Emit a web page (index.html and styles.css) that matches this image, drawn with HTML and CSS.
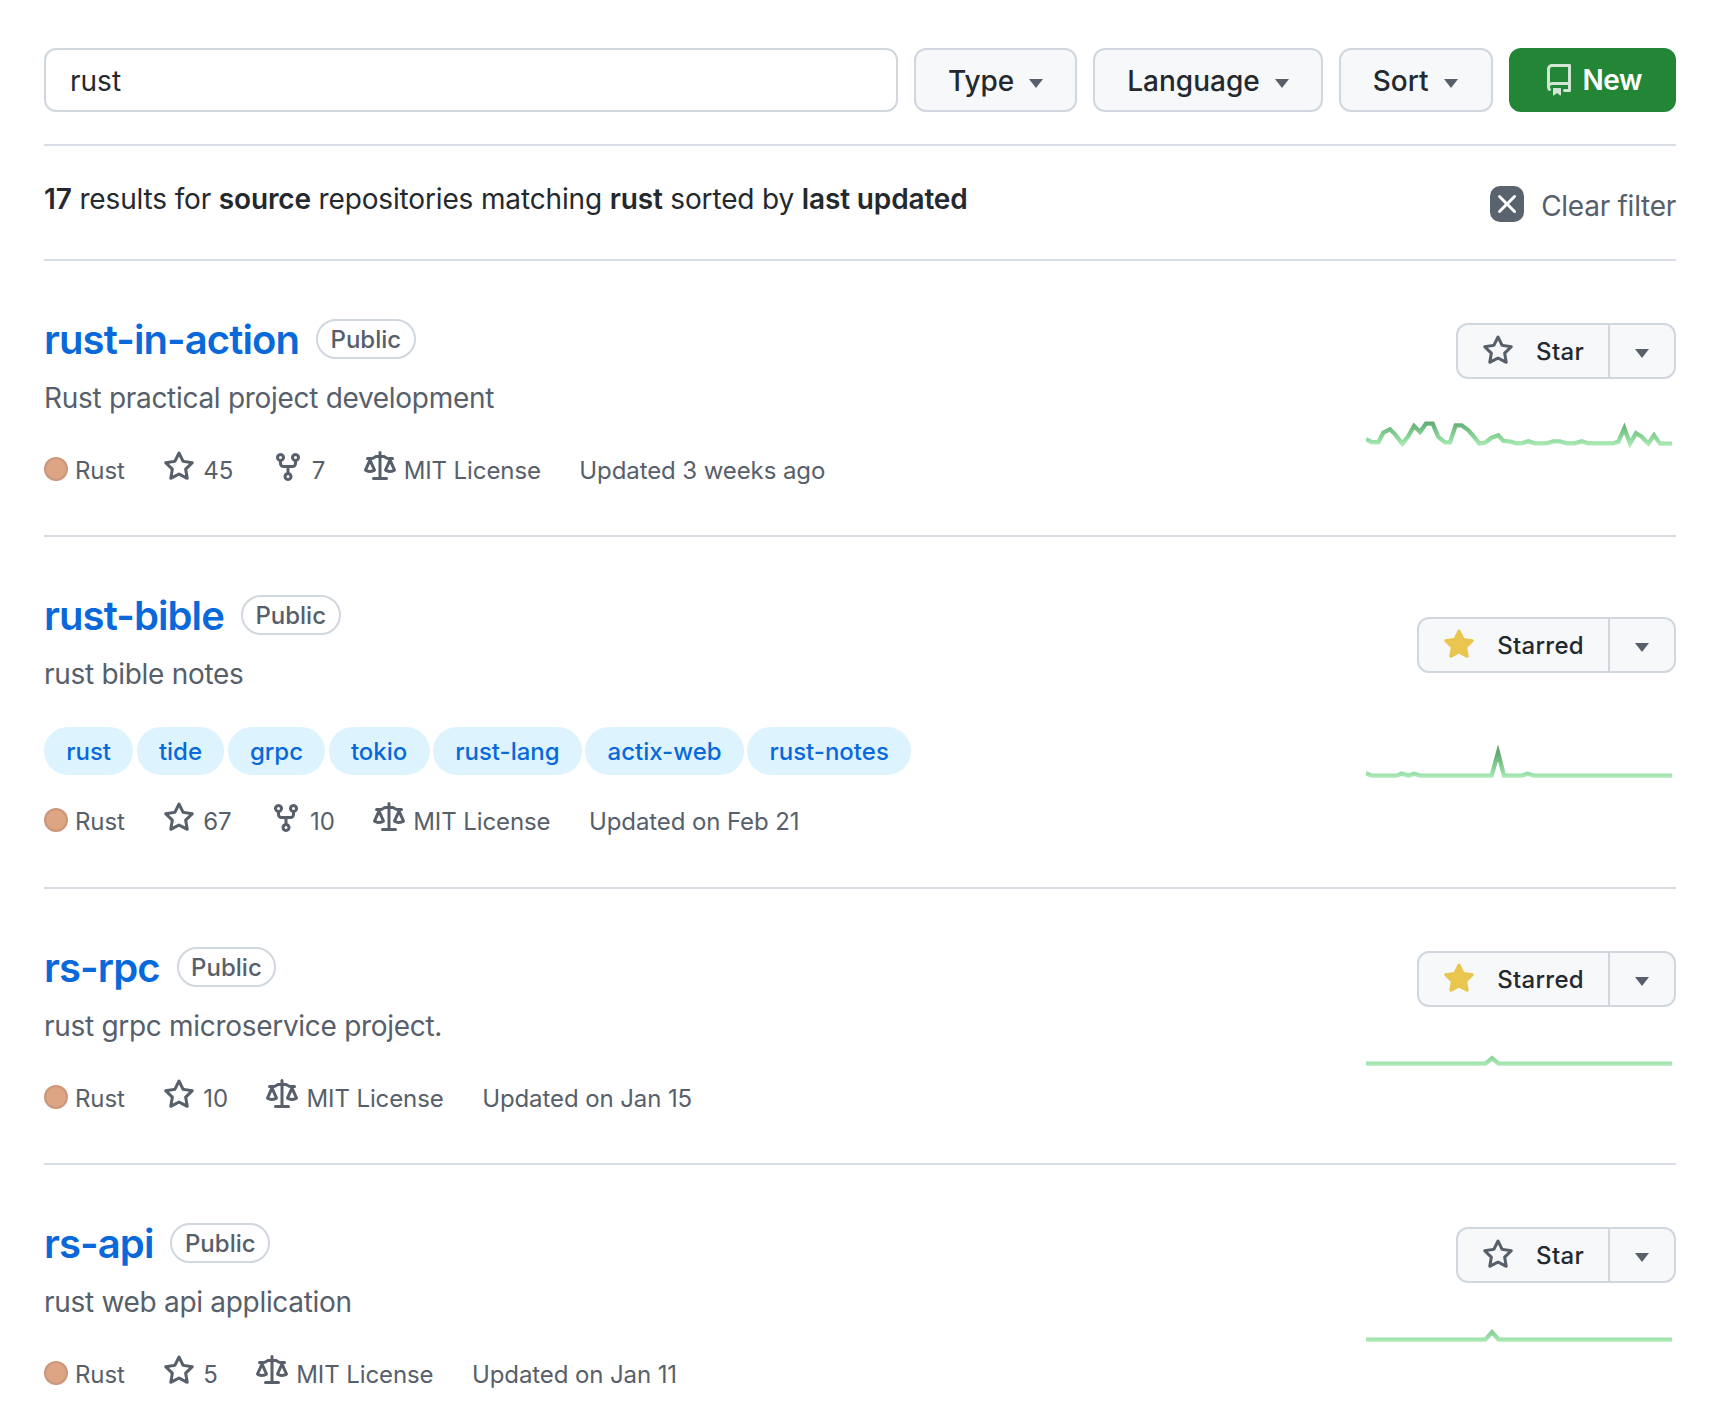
FILE: index.html
```html
<!DOCTYPE html>
<html lang="en">
<head>
	<meta charset="utf-8">
	<title>Repositories</title>
	<link rel="stylesheet" href="styles.css">
</head>
<body>
	<!-- Icons -->
	<svg class="sprite" aria-hidden="true">
		<defs>
			<linearGradient id="sparkGrad" gradientUnits="userSpaceOnUse" x1="0" y1="436" x2="0" y2="360">
				<stop offset="0" stop-color="#b4ecbd"/>
				<stop offset="0.25" stop-color="#93dda2"/>
				<stop offset="1" stop-color="#5fa86f"/>
			</linearGradient>
		</defs>
		<symbol id="i-star" viewBox="0 0 16 16"><path d="M8 .25a.75.75 0 0 1 .673.418l1.882 3.815 4.21.612a.75.75 0 0 1 .416 1.279l-3.046 2.97.719 4.192a.751.751 0 0 1-1.088.791L8 12.347l-3.766 1.98a.75.75 0 0 1-1.088-.79l.72-4.194L.818 6.374a.75.75 0 0 1 .416-1.28l4.21-.611L7.327.668A.75.75 0 0 1 8 .25Zm0 2.445L6.615 5.5a.75.75 0 0 1-.564.41l-3.097.45 2.24 2.184a.75.75 0 0 1 .216.664l-.528 3.084 2.769-1.456a.75.75 0 0 1 .698 0l2.77 1.456-.53-3.084a.75.75 0 0 1 .216-.664l2.24-2.183-3.096-.45a.75.75 0 0 1-.564-.41L8 2.694Z"/></symbol>
		<symbol id="i-star-fill" viewBox="0 0 16 16"><path d="M8 .25a.75.75 0 0 1 .673.418l1.882 3.815 4.21.612a.75.75 0 0 1 .416 1.279l-3.046 2.97.719 4.192a.751.751 0 0 1-1.088.791L8 12.347l-3.766 1.98a.75.75 0 0 1-1.088-.79l.72-4.194L.818 6.374a.75.75 0 0 1 .416-1.28l4.21-.611L7.327.668A.75.75 0 0 1 8 .25Z"/></symbol>
		<symbol id="i-fork" viewBox="0 0 16 16"><path d="M5 5.372v.878c0 .414.336.75.75.75h4.5a.75.75 0 0 0 .75-.75v-.878a2.25 2.25 0 1 1 1.5 0v.878a2.25 2.25 0 0 1-2.25 2.25h-1.5v2.128a2.251 2.251 0 1 1-1.5 0V8.5h-1.5A2.25 2.25 0 0 1 3.5 6.25v-.878a2.25 2.25 0 1 1 1.5 0ZM5 3.25a.75.75 0 1 0-1.5 0 .75.75 0 0 0 1.5 0Zm6.75.75a.75.75 0 1 0 0-1.5.75.75 0 0 0 0 1.5Zm-3 8.75a.75.75 0 1 0-1.5 0 .75.75 0 0 0 1.5 0Z"/></symbol>
		<symbol id="i-law" viewBox="0 0 16 16"><path d="M8.75.75V2h.985c.304 0 .603.08.867.231l1.29.736c.038.022.08.033.124.033h2.234a.75.75 0 0 1 0 1.5h-.427l2.111 4.692a.75.75 0 0 1-.154.838l-.53-.53.529.531-.001.002-.002.002-.006.006-.006.005-.01.01-.045.04c-.21.176-.441.327-.686.45C14.556 10.78 13.88 11 13 11a4.498 4.498 0 0 1-2.023-.454 3.544 3.544 0 0 1-.686-.45l-.045-.04-.016-.015-.006-.006-.004-.004v-.001a.75.75 0 0 1-.154-.838L12.178 4.5h-.162c-.305 0-.604-.079-.868-.231l-1.29-.736a.245.245 0 0 0-.124-.033H8.75V13h2.5a.75.75 0 0 1 0 1.5h-6.5a.75.75 0 0 1 0-1.5h2.5V3.5h-.984a.245.245 0 0 0-.124.033l-1.289.737c-.265.15-.564.23-.869.23h-.162l2.112 4.692a.75.75 0 0 1-.154.838l-.53-.53.529.531-.001.002-.002.002-.006.006-.016.015-.045.04c-.21.176-.441.327-.686.45C4.556 10.78 3.88 11 3 11a4.498 4.498 0 0 1-2.023-.454 3.544 3.544 0 0 1-.686-.45l-.045-.04-.016-.015-.006-.006-.004-.004v-.001a.75.75 0 0 1-.154-.838L2.178 4.5H1.75a.75.75 0 0 1 0-1.5h2.234a.249.249 0 0 0 .125-.033l1.288-.737c.265-.15.564-.23.869-.23h.984V.75a.75.75 0 0 1 1.5 0Zm2.945 8.477c.285.135.718.273 1.305.273s1.02-.138 1.305-.273L13 6.327Zm-10 0c.285.135.718.273 1.305.273s1.02-.138 1.305-.273L3 6.327Z"/></symbol>
		<symbol id="i-repo" viewBox="0 0 16 16"><path d="M2 2.5A2.5 2.5 0 0 1 4.5 0h8.75a.75.75 0 0 1 .75.75v12.5a.75.75 0 0 1-.75.75h-2.5a.75.75 0 0 1 0-1.5h1.75v-2h-8a1 1 0 0 0-.714 1.7.75.75 0 1 1-1.072 1.05A2.495 2.495 0 0 1 2 11.5Zm10.5-1h-8a1 1 0 0 0-1 1v6.708A2.486 2.486 0 0 1 4.5 9h8ZM5 12.25a.25.25 0 0 1 .25-.25h3.5a.25.25 0 0 1 .25.25v3.25a.25.25 0 0 1-.4.2l-1.45-1.087a.249.249 0 0 0-.3 0L5.4 15.7a.25.25 0 0 1-.4-.2Z"/></symbol>
		<symbol id="i-x" viewBox="0 0 16 16"><path d="M3.72 3.72a.75.75 0 0 1 1.06 0L8 6.94l3.22-3.22a.749.749 0 0 1 1.275.326.749.749 0 0 1-.215.734L9.06 8l3.22 3.22a.749.749 0 0 1-.326 1.275.749.749 0 0 1-.734-.215L8 9.06l-3.22 3.22a.751.751 0 0 1-1.042-.018.751.751 0 0 1-.018-1.042L6.94 8 3.72 4.78a.75.75 0 0 1 0-1.06Z"/></symbol>
	</svg>

	<main class="page">
		<!-- Filter bar -->
		<div class="filters">
			<input class="search" type="text" value="rust">
			<button class="btn">Type <span class="caret"></span></button>
			<button class="btn">Language <span class="caret"></span></button>
			<button class="btn btn-sort">Sort <span class="caret"></span></button>
			<button class="btn btn-new"><svg class="icon"><use href="#i-repo"/></svg>New</button>
		</div>

		<div class="summary">
			<p class="summary-text"><b>17</b> results for <b>source</b> repositories matching <b>rust</b> sorted by <b>last updated</b></p>
			<a class="clear"><span class="clear-x"><svg class="icon"><use href="#i-x"/></svg></span><span class="clear-label">Clear filter</span></a>
		</div>

		<!-- Repositories -->
		<div class="repo">
			<div class="repo-main">
				<div class="repo-head"><a class="repo-name">rust-in-action</a><span class="badge">Public</span></div>
				<p class="repo-desc">Rust practical project development</p>
				<div class="meta">
					<span class="meta-item"><span class="dot"></span>Rust</span>
					<span class="meta-item"><svg class="icon"><use href="#i-star"/></svg>45</span>
					<span class="meta-item"><svg class="icon"><use href="#i-fork"/></svg>7</span>
					<span class="meta-item"><svg class="icon"><use href="#i-law"/></svg>MIT License</span>
					<span class="meta-item">Updated 3 weeks ago</span>
				</div>
			</div>
			<div class="repo-side">
				<div class="star-group">
					<button class="star-btn"><svg class="icon"><use href="#i-star"/></svg>Star</button>
					<button class="star-drop"><span class="caret"></span></button>
				</div>
				<svg class="spark" viewBox="78 270 918 180"><polyline points="78,415 95,423 115,424 130,395 150,385 165,400 187,428 205,405 222,375 240,393 258,368 278,368 295,408 315,424 330,424 347,373 365,373 385,388 400,405 418,428 435,425 455,410 475,403 490,420 510,422 530,427 545,427 565,421 585,427 620,427 640,421 660,421 680,427 705,427 725,421 745,427 820,427 835,422 853,382 870,428 888,397 905,407 925,428 942,403 960,428 996,428"/></svg>
			</div>
		</div>

		<div class="repo repo-topics">
			<div class="repo-main">
				<div class="repo-head"><a class="repo-name">rust-bible</a><span class="badge">Public</span></div>
				<p class="repo-desc">rust bible notes</p>
				<div class="topics">
					<a class="topic">rust</a>
					<a class="topic">tide</a>
					<a class="topic">grpc</a>
					<a class="topic">tokio</a>
					<a class="topic">rust-lang</a>
					<a class="topic">actix-web</a>
					<a class="topic">rust-notes</a>
				</div>
				<div class="meta">
					<span class="meta-item"><span class="dot"></span>Rust</span>
					<span class="meta-item"><svg class="icon"><use href="#i-star"/></svg>67</span>
					<span class="meta-item"><svg class="icon"><use href="#i-fork"/></svg>10</span>
					<span class="meta-item"><svg class="icon"><use href="#i-law"/></svg>MIT License</span>
					<span class="meta-item">Updated on Feb 21</span>
				</div>
			</div>
			<div class="repo-side">
				<div class="star-group">
					<button class="star-btn"><svg class="icon icon-starred"><use href="#i-star-fill"/></svg>Starred</button>
					<button class="star-drop"><span class="caret"></span></button>
				</div>
				<svg class="spark" viewBox="78 270 918 180"><polyline points="78,421 95,428 170,428 185,422 205,428 222,422 240,428 455,428 474,359 492,428 545,428 563,422 582,428 996,428"/></svg>
			</div>
		</div>

		<div class="repo">
			<div class="repo-main">
				<div class="repo-head"><a class="repo-name">rs-rpc</a><span class="badge">Public</span></div>
				<p class="repo-desc">rust grpc microservice project.</p>
				<div class="meta">
					<span class="meta-item"><span class="dot"></span>Rust</span>
					<span class="meta-item"><svg class="icon"><use href="#i-star"/></svg>10</span>
					<span class="meta-item"><svg class="icon"><use href="#i-law"/></svg>MIT License</span>
					<span class="meta-item">Updated on Jan 15</span>
				</div>
			</div>
			<div class="repo-side">
				<div class="star-group">
					<button class="star-btn"><svg class="icon icon-starred"><use href="#i-star-fill"/></svg>Starred</button>
					<button class="star-drop"><span class="caret"></span></button>
				</div>
				<svg class="spark spark-flat" viewBox="78 270 918 180"><polyline points="78,428 436,428 456,412 476,428 996,428"/></svg>
			</div>
		</div>

		<div class="repo repo-last">
			<div class="repo-main">
				<div class="repo-head"><a class="repo-name">rs-api</a><span class="badge">Public</span></div>
				<p class="repo-desc">rust web api application</p>
				<div class="meta">
					<span class="meta-item"><span class="dot"></span>Rust</span>
					<span class="meta-item"><svg class="icon"><use href="#i-star"/></svg>5</span>
					<span class="meta-item"><svg class="icon"><use href="#i-law"/></svg>MIT License</span>
					<span class="meta-item">Updated on Jan 11</span>
				</div>
			</div>
			<div class="repo-side">
				<div class="star-group">
					<button class="star-btn"><svg class="icon"><use href="#i-star"/></svg>Star</button>
					<button class="star-drop"><span class="caret"></span></button>
				</div>
				<svg class="spark spark-flat" viewBox="78 270 918 180"><polyline points="78,428 436,428 456,406 476,428 996,428"/></svg>
			</div>
		</div>
	</main>
</body>
</html>
```

FILE: styles.css
```css
* {
	box-sizing: border-box;
}

html, body {
	height: 1414px;
	overflow: hidden;
}

body {
	margin: 0;
	background: #fff;
	color: #24292f;
	font-family: Inter, "Liberation Sans", sans-serif;
}

button, input {
	font-family: inherit;
}

.sprite {
	display: block;
	width: 0;
	height: 0;
}

.page {
	width: 1632px;
	margin-left: 44px;
	padding-top: 48px;
}

.icon {
	width: 32px;
	height: 32px;
	fill: currentColor;
	flex: none;
}

.caret {
	display: inline-block;
	width: 0;
	height: 0;
	margin-top: 5px;
	border-top: 9px solid #57606a;
	border-left: 7.5px solid transparent;
	border-right: 7.5px solid transparent;
}

/* Filter bar */
.filters {
	display: flex;
	gap: 16px;
	height: 98px;
	padding-bottom: 34px;
	border-bottom: 2px solid #d8dee4;
}

.search {
	flex: 1;
	min-width: 0;
	height: 64px;
	padding: 2px 24px 0;
	border: 2px solid #d0d7de;
	border-radius: 12px;
	background: #fff;
	color: #24292f;
	font-size: 28px;
}

.btn {
	display: flex;
	align-items: center;
	gap: 15px;
	height: 64px;
	padding: 2px 32px 0;
	border: 2px solid #d0d7de;
	border-radius: 12px;
	background: #f6f8fa;
	color: #24292f;
	font-size: 28px;
	font-weight: 500;
}

.btn-sort {
	padding-right: 33px;
}

.btn-new {
	gap: 8px;
	padding: 0 32px 0 32px;
	border-color: #238636;
	background: #238636;
	color: #fff;
	font-weight: 600;
	letter-spacing: -0.5px;
}

.btn-new .icon {
	opacity: 0.8;
}

/* Results line */
.summary {
	display: flex;
	justify-content: space-between;
	height: 115px;
	border-bottom: 2px solid #d8dee4;
}

.summary-text {
	margin: 33px 0 0;
	font-size: 28px;
	line-height: 40px;
	letter-spacing: -0.15px;
}

.summary-text b {
	font-weight: 600;
}

.clear {
	display: flex;
	align-items: center;
	gap: 17px;
	height: 36px;
	margin-top: 40px;
	color: #57606a;
	font-size: 28px;
	letter-spacing: -0.27px;
}

.clear-label {
	margin-top: 4px;
}

.clear-x {
	display: flex;
	align-items: center;
	justify-content: center;
	width: 34px;
	height: 36px;
	border-radius: 10px;
	background: #59636e;
	color: #fff;
}

/* Repository rows */
.repo {
	display: flex;
	justify-content: space-between;
	padding: 48px 0 45px;
	border-bottom: 2px solid #d8dee4;
}

.repo-topics {
	padding-bottom: 46px;
}

.repo-last {
	border-bottom: 0;
}

.repo-head {
	display: flex;
	align-items: center;
	gap: 17px;
	height: 60px;
}

.repo-name {
	color: #0969da;
	font-size: 40px;
	font-weight: 600;
	letter-spacing: -0.9px;
}

.badge {
	height: 40px;
	padding: 0 12.5px;
	border: 2px solid #d0d7de;
	border-radius: 20px;
	color: #57606a;
	font-size: 24px;
	font-weight: 500;
	line-height: 38px;
}

.repo-desc {
	margin: 8px 0 0;
	color: #57606a;
	font-size: 28px;
	line-height: 42px;
	letter-spacing: -0.3px;
}

.topics {
	display: flex;
	gap: 3.5px;
	margin-top: 32px;
}

.topic {
	height: 48px;
	padding: 0 22.2px;
	border-radius: 24px;
	background: #ddf4ff;
	color: #0969da;
	font-size: 24px;
	font-weight: 500;
	line-height: 49px;
}

.meta {
	display: flex;
	gap: 38.5px;
	height: 40px;
	margin-top: 31px;
	color: #57606a;
	font-size: 24px;
	letter-spacing: -0.1px;
}

.topics + .meta {
	margin-top: 26px;
}

.meta-item {
	display: flex;
	align-items: center;
	gap: 8px;
}

.meta-item .icon {
	margin-top: -6px;
}

.dot {
	width: 24px;
	height: 24px;
	margin: -2px -1px 0 0;
	border: 2px solid rgba(27, 31, 36, 0.1);
	border-radius: 50%;
	background: #dea584;
}

.repo-side {
	display: flex;
	flex-direction: column;
	align-items: flex-end;
	padding-top: 14px;
}

.repo-topics .repo-side {
	padding-top: 32px;
}

.star-group {
	display: flex;
	height: 56px;
	border: 2px solid #d0d7de;
	border-radius: 12px;
	background: #f6f8fa;
}

.star-btn {
	display: flex;
	align-items: center;
	gap: 22px;
	padding: 0 24px;
	border: 0;
	border-right: 2px solid #d0d7de;
	background: none;
	color: #24292f;
	font-size: 24px;
	font-weight: 500;
	letter-spacing: 0.3px;
}

.star-btn .icon {
	color: #57606a;
}

.star-btn .icon-starred {
	color: #eac54f;
}

.star-drop {
	display: flex;
	align-items: center;
	justify-content: center;
	width: 64px;
	padding: 0;
	border: 0;
	background: none;
}

.spark {
	display: block;
	width: 306px;
	height: 60px;
	margin: 12px 4px 0 0;
}

.repo-topics .spark {
	margin-top: 50px;
}

.spark-flat {
	margin-top: 4px;
}

.spark polyline {
	fill: none;
	stroke: url(#sparkGrad);
	stroke-width: 13;
	stroke-linejoin: miter;
}
```
